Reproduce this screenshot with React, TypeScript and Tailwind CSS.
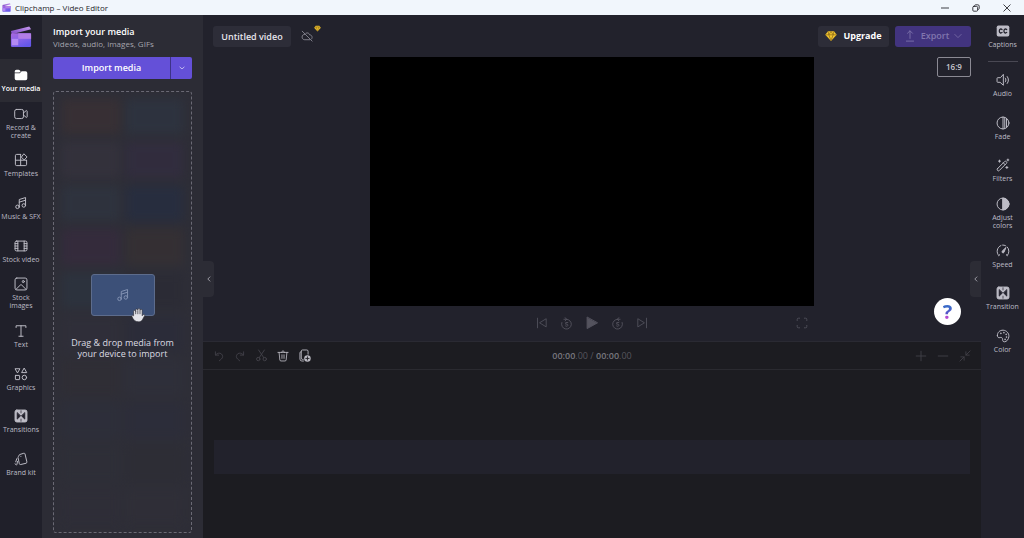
import { FC, ReactNode } from "react";

type IconProps = { className?: string; children: ReactNode };

const Icon: FC<IconProps> = ({ className = "size-4", children }) => (
  <svg
    viewBox="0 0 20 20"
    className={className}
    fill="none"
    stroke="currentColor"
    strokeWidth="1.4"
    strokeLinecap="round"
    strokeLinejoin="round"
    aria-hidden="true"
  >
    {children}
  </svg>
);

const ClipchampLogo: FC<{ className: string; id: string }> = ({ className, id }) => (
  <svg viewBox="0 0 24 24" className={className} aria-hidden="true">
    <defs>
      <linearGradient id={`${id}-top`} x1="0" y1="1" x2="1" y2="0">
        <stop offset="0" stopColor="#7d48c4" />
        <stop offset="1" stopColor="#c79af0" />
      </linearGradient>
      <linearGradient id={`${id}-body`} x1="0" y1="0" x2="0.6" y2="1">
        <stop offset="0" stopColor="#a868dc" />
        <stop offset="0.5" stopColor="#8a63ea" />
        <stop offset="1" stopColor="#6457e8" />
      </linearGradient>
    </defs>
    <path d="M1 5.500 21 0.500 23 3.500 2 9 Z" fill={`url(#${id}-top)`} />
    <rect x="1" y="8" width="22" height="15" rx="1.5" fill={`url(#${id}-body)`} />
    <rect x="9" y="8" width="14" height="6" fill="#b27de6" />
    <rect x="2" y="14" width="7" height="7" fill="#b48af4" />
  </svg>
);

const Diamond: FC<{ className: string }> = ({ className }) => (
  <svg viewBox="0 0 20 20" className={className} aria-hidden="true">
    <path d="M5 2 L15 2 L19.5 8 L10 18.5 L0.5 8 Z" fill="#f2c52f" />
    <path
      d="M1 8h18M6.400 8 10 17.500 13.600 8M5.200 2.400 6.400 8 10 2.400 13.600 8 14.800 2.400"
      fill="none"
      stroke="#8a6818"
      strokeWidth="1.2"
    />
  </svg>
);

const MusicNotes = (
  <>
    <circle cx="5" cy="15.5" r="2.5" />
    <circle cx="14" cy="13.5" r="2.5" />
    <path d="M7.5 15.5V5l9-2.800v11.300M7.500 8.800l9-2.800" />
  </>
);

const TransitionBox = (
  <>
    <rect x="1.5" y="1.5" width="17" height="17" rx="2.5" fill="currentColor" />
    <path d="M4.500 5.500v9L9.200 10ZM15.500 5.500v9L10.800 10Z" fill="#22212c" stroke="#22212c" strokeWidth="1" />
    <path d="M10 2.500v3M10 14.500v3" stroke="#22212c" strokeWidth="1" />
  </>
);

const leftItems = [
  {
    label: "Your media",
    active: true,
    icon: (
      <>
        <path d="M1 5.500V5a2.500 2.500 0 0 1 2.500-2.500h3c.6 0 1.200.3 1.600.7l1.500 1.500-1.800 1.600H1Z" fill="currentColor" stroke="none" />
        <path d="M11 4.700h5.500A2.500 2.500 0 0 1 19 7.200v7.800a2.500 2.500 0 0 1-2.500 2.500h-13A2.500 2.500 0 0 1 1 15V7.600h7.200Z" fill="currentColor" stroke="none" />
      </>
    ),
  },
  {
    label: "Record & create",
    icon: (
      <>
        <rect x="1" y="3.5" width="12.5" height="13" rx="2.5" />
        <path d="M13.500 8.500 17.300 5.300c.7-.5 1.500-.1 1.500.7v8c0 .8-.8 1.200-1.500.7l-3.800-3.200" />
      </>
    ),
  },
  {
    label: "Templates",
    icon: (
      <>
        <path d="M9.500 2H3.800A1.800 1.800 0 0 0 2 3.800v12.400A1.800 1.800 0 0 0 3.800 18h12.400a1.800 1.800 0 0 0 1.800-1.800V10.500M9.500 2v16M2 10.300h16" />
        <path d="M14.500 1.500 18.700 5.700 14.500 9.900 10.900 6.300Z" />
      </>
    ),
  },
  { label: "Music & SFX", icon: MusicNotes },
  {
    label: "Stock video",
    icon: (
      <>
        <rect x="1.5" y="3" width="17" height="14" rx="2" />
        <path d="M5.500 3v14M14.500 3v14M1.500 6.600h4M1.500 10h4M1.500 13.400h4M14.500 6.600h4M14.500 10h4M14.500 13.400h4" />
      </>
    ),
  },
  {
    label: "Stock images",
    icon: (
      <>
        <rect x="1.5" y="1.5" width="17" height="17" rx="2.5" />
        <circle cx="13.3" cy="6.5" r="1.5" />
        <path d="m3 17.500 6-6a1.500 1.500 0 0 1 2 0l6 6" />
      </>
    ),
  },
  { label: "Text", icon: <path d="M3 5V2.500h14V5M10 2.500v15M7 17.500h6" /> },
  {
    label: "Graphics",
    icon: (
      <>
        <path d="M2 2.500h6.500L5.300 8Z" />
        <path d="M14.800 2 18.200 8h-6.800Z" />
        <rect x="2" y="12" width="6" height="6" rx="0.5" />
        <circle cx="14.8" cy="15" r="3.2" />
      </>
    ),
  },
  { label: "Transitions", icon: TransitionBox },
  {
    label: "Brand kit",
    icon: (
      <>
        <path d="M8.500 3.500 14 1.800c.8-.2 1.400.1 1.700.8l2.700 11.500c.2 1-.3 1.800-1.200 2L9.500 17.900c-1 .2-1.700-.3-1.900-1.200L5.800 8.200c-.1-.6 0-1 .3-1.500Z" />
        <path d="M9.800 6.200v.1M4 9.500 2.500 14M5 13.500l-.8 4.200M1.500 17l1.800 1.300" />
      </>
    ),
  },
];

const rightItems = [
  {
    label: "Audio",
    icon: (
      <>
        <path d="M10.500 2.500v15L5.800 13.300H2.500a1 1 0 0 1-1-1V7.700a1 1 0 0 1 1-1h3.300Z" />
        <path d="M13.300 7.300c1.200 1.600 1.200 3.800 0 5.400M16 5c2.400 3 2.400 7 0 10" />
      </>
    ),
  },
  {
    label: "Fade",
    icon: (
      <>
        <circle cx="10" cy="10" r="8.5" />
        <path d="M10 1.500v17M12.500 2.500v15M15 4v12" />
      </>
    ),
  },
  {
    label: "Filters",
    icon: (
      <>
        <path d="m2.200 15.200 10-10a1.800 1.800 0 0 1 2.600 2.600l-10 10a1.800 1.800 0 0 1-2.600-2.600ZM10.500 7l2.600 2.600" />
        <path d="M5 3v3M3.500 4.500h3M17 1.500v2.600M15.700 2.800h2.600M15.500 12v3M14 13.500h3" />
      </>
    ),
  },
  {
    label: "Adjust colors",
    icon: (
      <>
        <circle cx="10" cy="10" r="8.5" />
        <path d="M10 1.500a8.500 8.500 0 0 1 0 17Z" fill="currentColor" />
      </>
    ),
  },
  {
    label: "Speed",
    icon: (
      <>
        <path d="M4 16.500A8.700 8.700 0 0 1 7 2.200M9.500 1.500a8.700 8.700 0 0 1 4 .8M16 4.200a8.700 8.700 0 0 1 0 12.300M4 16.500l1.300-1.300M16 16.500l-1.300-1.300" />
        <path d="M14 5.500 11.300 12a1.500 1.500 0 0 1-2.700-1.200Z" fill="currentColor" />
      </>
    ),
  },
  { label: "Transition", icon: TransitionBox },
  {
    label: "Color",
    icon: (
      <>
        <path d="M2 9.500C1.500 5 5.500 1.500 10.200 1.700c5 .3 8.500 4.500 8.200 9-.3 4.400-3.400 7.600-6.500 7.600-2.800 0-2.200-2.700-2.700-4.500-.5-2-2-2-3.700-1.500C3.500 12.900 2.300 12 2 9.500Z" />
        <path d="M7 6.200v.1M11.300 5.200v.1M14.500 7.700v.1M15 11.500v.1M13 14.800v.1" strokeWidth="2.2" />
      </>
    ),
  },
];

// muted thumbnails behind the drop zone
const tiles = [
  "bg-[#3b3134]",
  "bg-[#2e3542]",
  "bg-[#36333e]",
  "bg-[#332d41]",
  "bg-[#2f3541]",
  "bg-[#262e42]",
  "bg-[#372b3e]",
  "bg-[#373133]",
  "bg-[#2c3440]",
  "bg-[#2b2b35]",
  "bg-[#302f3a]",
  "bg-[#2b2c3a]",
  "bg-[#302e35]",
  "bg-[#2f303b]",
  "bg-[#2d2f3b]",
  "bg-[#2c2d3b]",
  "bg-[#2e2f38]",
  "bg-[#2d2d35]",
  "bg-[#2f2e38]",
  "bg-[#302f38]",
];

type RailItemProps = { label: string; icon: ReactNode; active?: boolean };

const RailItem: FC<RailItemProps> = ({ label, icon, active }) => (
  <button
    type="button"
    className={`flex w-full flex-col items-center justify-center gap-[3px] text-[7px] leading-[8px] ${
      active ? "bg-[#2b2b33] font-semibold text-white" : "text-[#bdbcc6]"
    }`}
  >
    <Icon className="size-[14px]">{icon}</Icon>
    <span className="max-w-[42px] text-center">{label}</span>
  </button>
);

const TitleBar: FC = () => (
  <header className="flex h-[15px] shrink-0 items-center bg-[#f1f6fc] pl-[2px] text-[8px] text-[#26262b]">
    <ClipchampLogo className="size-[9px]" id="bar" />
    <span className="ml-1">Clipchamp – Video Editor</span>
    <div className="ml-auto flex items-center gap-[23px] pr-[13px]">
      <button type="button" aria-label="Minimize">
        <Icon className="size-2"><path d="M1 10h18" strokeWidth="2.2" /></Icon>
      </button>
      <button type="button" aria-label="Restore">
        <Icon className="size-2">
          <g strokeWidth="2.2">
            <rect x="2" y="6" width="12" height="12" rx="2.5" />
            <path d="M6.500 3.500C7 2.500 7.500 2 9 2h5.500A3.500 3.500 0 0 1 18 5.500V11c0 1.500-.5 2-1.500 2.500" />
          </g>
        </Icon>
      </button>
      <button type="button" aria-label="Close">
        <Icon className="size-2"><path d="m2 2 16 16M18 2 2 18" strokeWidth="2.2" /></Icon>
      </button>
    </div>
  </header>
);

const MediaPanel: FC = () => (
  <section className="flex w-[161px] shrink-0 flex-col bg-[#2c2c35] px-[11px] pt-[11px] pb-[5px]">
    <h1 className="text-[9px] leading-3 font-semibold text-white">Import your media</h1>
    <p className="text-[8px] leading-3 text-[#a5a4ad]">Videos, audio, images, GIFs</p>
    <div className="mt-[7px] flex h-[22px] shrink-0 text-white">
      <button type="button" className="flex-1 rounded-l-[2px] bg-[#6450d8] text-[9px] font-semibold">
        Import media
      </button>
      <button
        type="button"
        aria-label="More import options"
        className="flex w-[22px] items-center justify-center rounded-r-[2px] border-l border-[#3d3387] bg-[#6450d8]"
      >
        <Icon className="size-[6px]"><path d="m3 7 7 6 7-6" strokeWidth="2" /></Icon>
      </button>
    </div>
    <div className="relative mt-3 flex min-h-0 flex-1 flex-col items-center justify-center overflow-hidden rounded-[3px] border border-dashed border-[#6a6974] bg-[#2e2e37] pt-2">
      <div className="absolute inset-0 grid grid-cols-2 gap-x-[6px] gap-y-2 px-2 py-[7px] opacity-75 blur-[5px]">
        {tiles.map((color, index) => (
          <div key={index} className={color} />
        ))}
      </div>
      <div className="relative flex h-[42px] w-16 items-center justify-center rounded-[3px] border border-[#5d6c8c] bg-[#3c5078] text-[#8392b3]">
        <Icon className="size-[14px]">{MusicNotes}</Icon>
        <svg viewBox="0 0 20 20" className="absolute right-2 -bottom-2 size-4" aria-hidden="true">
          <path
            d="M4.500 11V5.500a1.300 1.300 0 0 1 2.600 0V3.800a1.300 1.300 0 0 1 2.700 0V3.300a1.300 1.300 0 0 1 2.700 0v1a1.300 1.300 0 0 1 2.700 0V11c.7-1 1.500-1.800 2.500-1.600.8.200.9 1 .5 1.700L15.500 16c-1 1.700-2.700 2.500-5 2.500-4 0-6.300-2.500-8-6.300-.6-1.500.6-2.500 2-1.200Z"
            fill="#e4e4ea"
            stroke="#2c2c35"
            strokeWidth="0.8"
          />
          <path d="M7.100 5v4M9.800 4v5M12.500 4.500V9" stroke="#2c2c35" strokeWidth="0.9" />
        </svg>
      </div>
      <p className="relative mt-[21px] text-center text-[9px] leading-[11px] font-medium text-[#dcdbe2]">
        Drag &amp; drop media from
        <br />
        your device to import
      </p>
    </div>
  </section>
);

const EditorHeader: FC = () => (
  <div className="flex h-[42px] shrink-0 items-center px-[10px]">
    <input
      aria-label="Video title"
      defaultValue="Untitled video"
      className="h-[21px] w-[78px] rounded-[3px] bg-[#2d2d38] text-center text-[9px] font-semibold text-[#e6e5ec]"
    />
    <button type="button" aria-label="Backup is off" className="relative ml-[10px] text-[#8f8e99]">
      <Icon className="size-3">
        <path d="M6 7.200C4 7.300 1.800 8.600 1.800 11.800c0 3 2.200 4.400 4.400 4.400h8.300M8.200 5.300c3-1.600 5.800.3 6 2.700 2.300 0 4.300 1.500 4.300 4.300 0 1-.3 1.800-.8 2.500M2 2l16.500 16.500" />
      </Icon>
      <Diamond className="absolute -top-[5px] -right-2 size-[7px]" />
    </button>
    <button
      type="button"
      className="ml-auto flex h-[21px] w-[71px] items-center justify-center gap-[6px] rounded-[3px] bg-[#2d2d38] text-[9px] font-bold text-white"
    >
      <Diamond className="size-3" />
      Upgrade
    </button>
    <button
      type="button"
      className="ml-[6px] flex h-[21px] w-[76px] items-center justify-center gap-[5px] rounded-[3px] bg-[#42347f] text-[9px] font-semibold text-[#8176ae]"
    >
      <Icon className="size-3"><path d="M10 14V1.500M5.800 5.500 10 1.300l4.200 4.200M4 18.500h12" /></Icon>
      Export
      <Icon className="size-2"><path d="m2 6 8 8 8-8" strokeWidth="1.8" /></Icon>
    </button>
  </div>
);

const PlayerControls: FC = () => (
  <div className="grid h-[34px] shrink-0 grid-cols-[1fr_57%_1fr] text-[#54535e]">
    <div className="relative col-start-2 flex items-center justify-center gap-3">
      <button type="button" aria-label="Skip to start">
        <Icon className="size-3"><path d="M2.500 2v16M17 3.500v13L6.500 10Z" /></Icon>
      </button>
      <button type="button" aria-label="Back 5 seconds">
        <Icon className="size-[13px]">
          <path d="M10 3.500a7.500 7.500 0 1 1-7.200 5M10 3.500H6M10 3.500 8 1M10 3.500 8 6" />
          <path d="M12 8.500H8.800v2.600c3.200-.6 3.600 1 3.200 2.200-.5 1.200-2.400 1.300-3.400.5" />
        </Icon>
      </button>
      <button type="button" aria-label="Play">
        <Icon className="size-[14px]"><path d="M3 2v16l14.500-8Z" fill="currentColor" /></Icon>
      </button>
      <button type="button" aria-label="Forward 5 seconds">
        <Icon className="size-[13px]">
          <path d="M10 3.500a7.500 7.500 0 1 0 7.200 5M10 3.500h4M10 3.500 12 1M10 3.500 12 6" />
          <path d="M12 8.500H8.800v2.600c3.200-.6 3.600 1 3.200 2.200-.5 1.200-2.400 1.300-3.400.5" />
        </Icon>
      </button>
      <button type="button" aria-label="Skip to end">
        <Icon className="size-3"><path d="M17.500 2v16M3 3.500v13L13.500 10Z" /></Icon>
      </button>
      <button type="button" aria-label="Full screen" className="absolute right-[6px]">
        <Icon className="size-3">
          <path d="M2 6V4a2 2 0 0 1 2-2h2M14 2h2a2 2 0 0 1 2 2v2M18 14v2a2 2 0 0 1-2 2h-2M6 18H4a2 2 0 0 1-2-2v-2" />
        </Icon>
      </button>
    </div>
  </div>
);

const Timeline: FC = () => (
  <section className="flex h-[197px] shrink-0 flex-col border-t border-[#2a2a33] bg-[#1c1c21]">
    <div className="grid h-7 shrink-0 grid-cols-3 items-center border-b border-[#2a2a30] px-[10px] text-[#44434b]">
      <div className="flex items-center gap-[9px]">
        <button type="button" aria-label="Undo">
          <Icon className="size-3"><path d="M4 3v5.500h5.500M4.300 8.300C7 5.300 11 4 14 6.500c3 2.700 2.500 6.500 0 8.500l-3.500 3" /></Icon>
        </button>
        <button type="button" aria-label="Redo">
          <Icon className="size-3"><path d="M16 3v5.500h-5.500M15.700 8.300C13 5.300 9 4 6 6.500c-3 2.700-2.500 6.500 0 8.500l3.500 3" /></Icon>
        </button>
        <button type="button" aria-label="Split">
          <Icon className="size-[13px]">
            <circle cx="5" cy="15.5" r="2.6" />
            <circle cx="15" cy="15.5" r="2.6" />
            <path d="M6.500 13.300 14.500 1.500M13.500 13.300 5.500 1.500" />
          </Icon>
        </button>
        <button type="button" aria-label="Delete" className="text-[#bbbac2]">
          <Icon className="size-3">
            <path d="M1.500 4h17M7.500 4c0-3.300 5-3.300 5 0M3.500 4l1.200 12.500a2 2 0 0 0 2 1.800h6.600a2 2 0 0 0 2-1.800L16.500 4M8.300 8v6M11.700 8v6" />
          </Icon>
        </button>
        <button type="button" aria-label="Duplicate" className="text-[#bbbac2]">
          <Icon className="size-[13px]">
            <path d="M8 16H7a2 2 0 0 1-2-2V3.500a2 2 0 0 1 2-2h6.500a2 2 0 0 1 2 2V8M5 4a2 2 0 0 0-2 2v9.500a3 3 0 0 0 3 3h2.500" />
            <circle cx="14.5" cy="14.5" r="5" fill="currentColor" stroke="none" />
            <path d="M14.500 12v5M12 14.500h5" stroke="#1c1c21" />
          </Icon>
        </button>
      </div>
      <p className="text-center text-[9px] leading-3 text-[#56555d]">
        <span className="font-semibold text-[#77767e]">00:00</span>.00 /{" "}
        <span className="font-semibold text-[#77767e]">00:00</span>.00
      </p>
      <div className="flex items-center justify-end gap-[10px]">
        <button type="button" aria-label="Zoom in">
          <Icon className="size-3"><path d="M10 2v16M2 10h16" /></Icon>
        </button>
        <button type="button" aria-label="Zoom out">
          <Icon className="size-3"><path d="M2 10h16" /></Icon>
        </button>
        <button type="button" aria-label="Fit to timeline">
          <Icon className="size-3"><path d="M18.500 1.500 11.500 8.500M11.500 3v5.500H17M1.500 18.500l7-7M3 11.500h5.500V17" /></Icon>
        </button>
      </div>
    </div>
    <div className="mx-[11px] mt-[70px] h-[34px] bg-[#22222c]" />
  </section>
);

export default function App() {
  return (
    <div className="flex h-screen flex-col overflow-hidden bg-[#22222c] font-['Open_Sans','Noto_Sans',sans-serif]">
      <TitleBar />
      <div className="flex min-h-0 flex-1">
        <nav aria-label="Media library" className="w-[42px] shrink-0 bg-[#20202a]">
          <div className="flex h-11 items-center justify-center">
            <ClipchampLogo className="size-[22px]" id="nav" />
          </div>
          <div className="grid h-[427px] grid-rows-10">
            {leftItems.map((item) => (
              <RailItem key={item.label} {...item} />
            ))}
          </div>
        </nav>

        <MediaPanel />

        <main className="relative flex min-w-0 flex-1 flex-col">
          <EditorHeader />
          <div className="grid grid-cols-[1fr_57%_1fr]">
            <div className="col-start-2 aspect-video bg-black" />
            <div className="flex items-start justify-end pr-[10px]">
              <button
                type="button"
                className="h-5 w-[34px] rounded-[2px] border border-[#8b8a94] text-[8px] font-semibold text-[#c9c8d0]"
              >
                16:9
              </button>
            </div>
          </div>
          <div className="flex-1">
            <PlayerControls />
          </div>
          <Timeline />

          <button
            type="button"
            aria-label="Collapse media panel"
            className="absolute top-[246px] left-0 flex h-9 w-[11px] items-center justify-center rounded-r-[4px] bg-[#2c2c35] text-[#bdbcc6]"
          >
            <Icon className="size-[6px]"><path d="m13 3-7 7 7 7" strokeWidth="2.5" /></Icon>
          </button>
          <button
            type="button"
            aria-label="Expand property panel"
            className="absolute top-[246px] right-0 flex h-9 w-[11px] items-center justify-center rounded-l-[4px] bg-[#2c2c35] text-[#bdbcc6]"
          >
            <Icon className="size-[6px]"><path d="m13 3-7 7 7 7" strokeWidth="2.5" /></Icon>
          </button>
          <button
            type="button"
            aria-label="Help"
            className="absolute top-[283px] right-5 flex size-[27px] items-center justify-center rounded-full bg-white"
          >
            <span className="bg-linear-to-b from-[#3a6ac8] from-30% via-[#5a4fc8] via-60% to-[#b848d0] to-70% bg-clip-text text-[20px] leading-6 font-bold text-transparent">
              ?
            </span>
          </button>
        </main>

        <nav aria-label="Properties" className="flex w-[43px] shrink-0 flex-col items-center">
          <div className="grid h-[42px] w-full shrink-0">
            <RailItem
              label="Captions"
              icon={
                <>
                  <rect x="1" y="2" width="18" height="16" rx="2.5" fill="currentColor" stroke="none" />
                  <path
                    d="M8.700 8c-1.600-1.600-4-.8-4 2s2.400 3.600 4 2M15.300 8c-1.600-1.600-4-.8-4 2s2.400 3.600 4 2"
                    stroke="#22222c"
                    strokeWidth="1.8"
                  />
                </>
              }
            />
          </div>
          <hr className="mt-1 w-[30px] border-[#494853]" />
          <div className="mt-[2px] grid h-[299px] w-full grid-rows-7">
            {rightItems.map((item) => (
              <RailItem key={item.label} {...item} />
            ))}
          </div>
        </nav>
      </div>
    </div>
  );
}
